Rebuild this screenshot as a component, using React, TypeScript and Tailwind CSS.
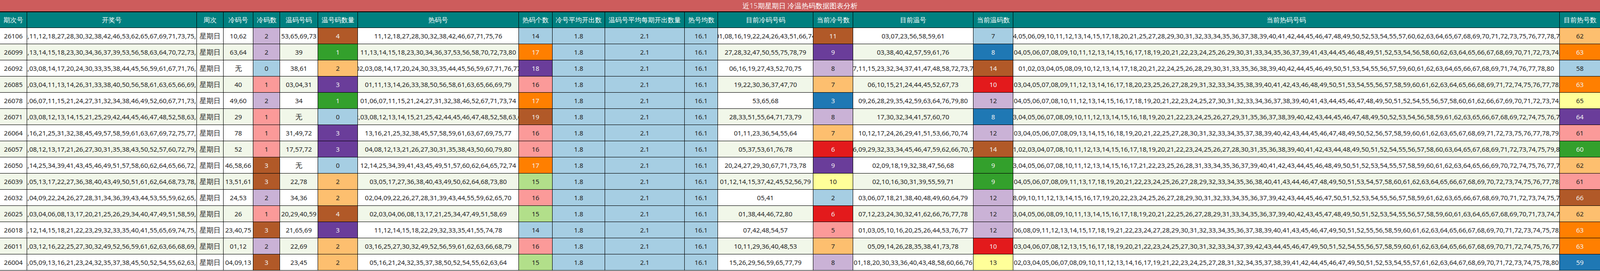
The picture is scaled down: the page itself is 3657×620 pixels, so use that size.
import React from "react";

const P = ["#a6cee3", "#1f78b4", "#b2df8a", "#33a02c", "#fb9a99", "#e31a1c", "#fdbf6f", "#ff7f00", "#cab2d6", "#6a3d9a", "#ffff99", "#b15928"];
const DARK = new Set([1, 3, 5, 7, 9, 11]);

const coldMap: Record<number, number> = { 0: 0, 1: 4, 2: 8, 3: 11 };
const warmMap: Record<number, number> = { 0: 0, 1: 3, 2: 6, 3: 9, 4: 11 };
const hotMap: Record<number, number> = { 14: 0, 15: 2, 16: 4, 17: 7, 18: 9, 19: 11 };
const curColdMap: Record<number, number> = { 2: 0, 3: 1, 5: 4, 6: 5, 7: 6, 8: 8, 9: 9, 10: 10, 11: 11 };
const curWarmMap: Record<number, number> = { 7: 0, 8: 1, 9: 3, 10: 5, 12: 8, 13: 10, 14: 11 };
const totMap: Record<number, number> = { 58: 0, 59: 1, 60: 3, 61: 4, 62: 6, 63: 7, 64: 9, 65: 10, 66: 11 };

type Row = [string, string, string, number, string, number, string, number, string, number, string, number];

const rows: Row[] = [
  ["26106", "10,11,12,18,27,28,30,32,38,42,46,53,62,65,67,69,71,73,75,76", "10,62", 2, "53,65,69,73", 4, "11,12,18,27,28,30,32,38,42,46,67,71,75,76", 14, "01,08,16,19,22,24,26,43,51,66,74", 11, "03,07,23,56,58,59,61", 7],
  ["26099", "11,13,14,15,18,23,30,34,36,37,39,53,56,58,63,64,70,72,73,80", "63,64", 2, "39", 1, "11,13,14,15,18,23,30,34,36,37,53,56,58,70,72,73,80", 17, "27,28,32,47,50,55,75,78,79", 9, "03,38,40,42,57,59,61,76", 8],
  ["26092", "02,03,08,14,17,20,24,30,33,35,38,44,45,56,59,61,67,71,76,77", "无", 0, "38,61", 2, "02,03,08,14,17,20,24,30,33,35,44,45,56,59,67,71,76,77", 18, "06,16,19,27,43,52,70,75", 8, "07,11,15,23,32,34,37,41,47,48,58,72,73,79", 14],
  ["26085", "01,03,04,11,13,14,26,31,33,38,40,50,56,58,61,63,65,66,69,79", "40", 1, "03,04,31", 3, "01,11,13,14,26,33,38,50,56,58,61,63,65,66,69,79", 16, "19,22,30,36,37,47,70", 7, "06,10,15,21,24,44,45,52,67,73", 10],
  ["26078", "01,06,07,11,15,21,24,27,31,32,34,38,46,49,52,60,67,71,73,74", "49,60", 2, "34", 1, "01,06,07,11,15,21,24,27,31,32,38,46,52,67,71,73,74", 17, "53,65,68", 3, "09,26,28,29,35,42,59,63,64,76,79,80", 12],
  ["26071", "02,03,08,12,13,14,15,21,25,29,42,44,45,46,47,48,52,58,63,66", "29", 1, "无", 0, "02,03,08,12,13,14,15,21,25,42,44,45,46,47,48,52,58,63,66", 19, "28,33,51,55,64,71,73,79", 8, "17,30,32,34,41,57,60,70", 8],
  ["26064", "13,16,21,25,31,32,38,45,49,57,58,59,61,63,67,69,72,75,77,78", "78", 1, "31,49,72", 3, "13,16,21,25,32,38,45,57,58,59,61,63,67,69,75,77", 16, "01,11,23,36,54,55,64", 7, "10,12,17,24,26,29,41,51,53,66,70,74", 12],
  ["26057", "04,08,12,13,17,21,26,27,30,31,35,38,43,50,52,57,60,72,79,80", "52", 1, "17,57,72", 3, "04,08,12,13,21,26,27,30,31,35,38,43,50,60,79,80", 16, "05,37,53,61,76,78", 6, "06,09,29,32,33,34,45,46,47,59,62,66,70,77", 14],
  ["26050", "12,14,25,34,39,41,43,45,46,49,51,57,58,60,62,64,65,66,72,74", "46,58,66", 3, "无", 0, "12,14,25,34,39,41,43,45,49,51,57,60,62,64,65,72,74", 17, "20,24,27,29,30,67,71,73,78", 9, "02,09,18,19,32,38,47,56,68", 9],
  ["26039", "03,05,13,17,22,27,36,38,40,43,49,50,51,61,62,64,68,73,78,80", "13,51,61", 3, "22,78", 2, "03,05,17,27,36,38,40,43,49,50,62,64,68,73,80", 15, "01,12,14,15,37,42,45,52,56,79", 10, "02,10,16,30,31,39,55,59,71", 9],
  ["26032", "02,04,09,22,24,26,27,28,31,34,36,39,43,44,53,55,59,62,65,70", "24,53", 2, "34,36", 2, "02,04,09,22,26,27,28,31,39,43,44,55,59,62,65,70", 16, "05,41", 2, "03,06,07,18,21,38,40,48,49,60,64,79", 12],
  ["26025", "02,03,04,06,08,13,17,20,21,25,26,29,34,40,47,49,51,58,59,69", "26", 1, "20,29,40,59", 4, "02,03,04,06,08,13,17,21,25,34,47,49,51,58,69", 15, "01,38,44,46,72,80", 6, "07,12,23,24,30,32,41,62,66,76,77,78", 12],
  ["26018", "11,12,14,15,18,21,22,23,29,32,33,35,40,41,55,65,69,74,75,78", "23,40,75", 3, "21,65,69", 3, "11,12,14,15,18,22,29,32,33,35,41,55,74,78", 14, "07,42,48,54,57", 5, "01,03,05,10,16,20,25,26,44,53,76,77", 12],
  ["26011", "01,03,12,16,22,25,27,30,32,49,52,56,59,61,62,63,66,68,69,79", "01,12", 2, "22,69", 2, "03,16,25,27,30,32,49,52,56,59,61,62,63,66,68,79", 16, "10,11,29,36,40,48,53", 7, "05,09,14,26,28,35,38,41,73,78", 10],
  ["26004", "04,05,09,13,16,21,23,24,32,35,37,38,45,50,52,54,55,62,63,64", "04,09,13", 3, "23,45", 2, "05,16,21,24,32,35,37,38,50,52,54,55,62,63,64", 15, "15,26,29,56,59,65,77,79", 8, "01,18,20,30,33,36,40,43,48,58,60,66,76", 13],
];

const headers = ["期次号", "开奖号", "周次", "冷码号", "冷码数", "温码号码", "温号码数量", "热码号", "热码个数", "冷号平均开出数", "温码号平均每期开出数量", "热号均数", "目前冷码号码", "当前冷号数", "目前温号", "当前温码数", "当前热码号码", "目前热号数"];

const cols = "grid grid-cols-[62px_388px_61px_68px_61px_87px_91px_368px_77px_120px_182px_76px_218px_91px_275px_91px_1249px_92px]";

function hotOf(cold: string, warm: string) {
  const ex = new Set([...cold.split(","), ...warm.split(",")]);
  const out: string[] = [];
  for (let i = 1; i <= 80; i++) {
    const s = String(i).padStart(2, "0");
    if (!ex.has(s)) out.push(s);
  }
  return out;
}

function Cell({ children, bg, last }: { children: React.ReactNode; bg?: string; last?: boolean }) {
  const idx = bg ? P.indexOf(bg) : -1;
  const white = idx >= 0 && DARK.has(idx);
  return (
    <div
      className={`flex items-center justify-center h-[37px] border-b border-black whitespace-nowrap overflow-hidden ${last ? "" : "border-r"} ${white ? "text-[#f2f2f2]" : "text-[#222]"}`}
      style={bg ? { backgroundColor: bg } : undefined}
    >
      {children}
    </div>
  );
}

const CJK = "font-[family-name:'Noto_Sans_CJK_SC',sans-serif]";

export default function App() {
  return (
    <div className="w-[3657px] bg-white text-[15px] font-[family-name:'Liberation_Serif','Noto_Sans_CJK_SC',serif]">
      <div className={`h-[28px] bg-[#cd5c5c] border-b-2 border-black flex items-center justify-center text-white text-[16px] ${CJK} font-light`}>
        近15期星期日 冷温热码数据图表分析
      </div>
      <div className={`${cols} bg-[#008080] text-white ${CJK} font-light text-[15px]`}>
        {headers.map((h, i) => (
          <div key={i} className={`h-[36px] flex items-center justify-center border-b border-black whitespace-nowrap ${i < headers.length - 1 ? "border-r" : ""}`}>
            {h}
          </div>
        ))}
      </div>
      {rows.map((r, i) => {
        const rowBg = i % 2 === 0 ? "bg-white" : "bg-[#f1f7e9]";
        const hot = hotOf(r[8], r[10]);
        return (
          <div key={r[0]} className={`${cols} ${rowBg}`}>
            <Cell>{r[0]}</Cell>
            <Cell>{r[1]}</Cell>
            <Cell><span className={`${CJK} text-[16px]`}>星期日</span></Cell>
            <Cell>{r[2] === "无" ? <span className={`${CJK} text-[16px]`}>无</span> : r[2]}</Cell>
            <Cell bg={P[coldMap[r[3]]]}>{r[3]}</Cell>
            <Cell>{r[4] === "无" ? <span className={`${CJK} text-[16px]`}>无</span> : r[4]}</Cell>
            <Cell bg={P[warmMap[r[5]]]}>{r[5]}</Cell>
            <Cell>{r[6]}</Cell>
            <Cell bg={P[hotMap[r[7]]]}>{r[7]}</Cell>
            <Cell bg="#a6cee3">1.8</Cell>
            <Cell bg="#a6cee3">2.1</Cell>
            <Cell bg="#a6cee3">16.1</Cell>
            <Cell>{r[8]}</Cell>
            <Cell bg={P[curColdMap[r[9]]]}>{r[9]}</Cell>
            <Cell>{r[10]}</Cell>
            <Cell bg={P[curWarmMap[r[11]]]}>{r[11]}</Cell>
            <Cell>{hot.join(",")}</Cell>
            <Cell bg={P[totMap[hot.length]]} last>{hot.length}</Cell>
          </div>
        );
      })}
    </div>
  );
}
